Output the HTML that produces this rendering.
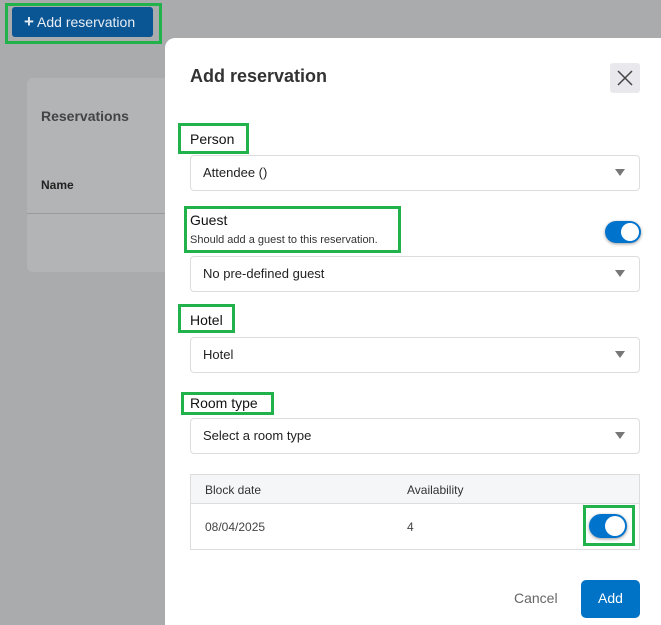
<!DOCTYPE html>
<html style="overflow:hidden;height:625px"><head><style>
*{box-sizing:border-box;margin:0;padding:0}
body{width:661px;height:625px;overflow:hidden;background:#aaabac;font-family:"Liberation Sans",sans-serif;position:relative;color:#333}
.a{position:absolute}
.g{position:absolute;border:3px solid #22b24c}
.sel{position:absolute;left:190px;width:450px;height:36px;border:1px solid #ddd;border-radius:4px;background:#fff;font-size:13px;padding-left:12px;line-height:34px;color:#222}
.sel:after{content:"";position:absolute;right:14px;top:13px;border-left:5px solid transparent;border-right:5px solid transparent;border-top:7px solid #777}
.lbl{position:absolute;font-size:14px;color:#111}
.tog{position:absolute;background:#0073cc;border-radius:12px;box-shadow:0 1px 3px rgba(0,0,0,.4)}
.tog i{position:absolute;right:2px;top:2px;background:#fff;border-radius:50%}
</style></head><body>
<div class="g" style="left:5px;top:3px;width:157px;height:41px"></div>
<div class="a" style="left:12px;top:7px;width:141px;height:30px;background:#0a5593;border-radius:3px;color:#e8eef5;font-size:14px;line-height:29px;padding-left:12px"><b style="font-size:17px">+</b> Add reservation</div>
<div class="a" style="left:27px;top:78px;width:160px;height:194px;background:#b3b4b5;border-radius:6px"></div>
<div class="a" style="left:41px;top:108px;font-size:14px;font-weight:bold;color:#444">Reservations</div>
<div class="a" style="left:41px;top:178px;font-size:12px;font-weight:bold;color:#222">Name</div>
<div class="a" style="left:27px;top:213px;width:140px;height:1px;background:#999"></div>
<div class="a" style="left:165px;top:38px;width:496px;height:587px;background:#fff;border-radius:10px 0 0 0"></div>
<div class="a" style="left:190px;top:66px;font-size:18px;font-weight:bold;color:#333">Add reservation</div>
<div class="a" style="left:610px;top:63px;width:30px;height:30px;background:#e8e8ed;border-radius:3px">
<svg width="30" height="30"><path d="M8 8L22 22M22 8L8 22" stroke="#444" stroke-width="1.5"/></svg></div>
<div class="g" style="left:178px;top:123px;width:71px;height:31px"></div>
<div class="lbl" style="left:190px;top:131px">Person</div>
<div class="sel" style="top:155px">Attendee ()</div>
<div class="g" style="left:184px;top:206px;width:217px;height:47px"></div>
<div class="lbl" style="left:190px;top:212px">Guest</div>
<div class="a" style="left:190px;top:234px;font-size:11px;color:#333">Should add a guest to this reservation.</div>
<div class="tog" style="left:605px;top:221px;width:36px;height:22px"><i style="width:18px;height:18px"></i></div>
<div class="sel" style="top:256px">No pre-defined guest</div>
<div class="g" style="left:178px;top:304px;width:57px;height:29px"></div>
<div class="lbl" style="left:190px;top:312px">Hotel</div>
<div class="sel" style="top:337px">Hotel</div>
<div class="g" style="left:181px;top:392px;width:93px;height:23px"></div>
<div class="lbl" style="left:190px;top:395px">Room type</div>
<div class="sel" style="top:418px">Select a room type</div>
<div class="a" style="left:190px;top:474px;width:450px;height:76px;border:1px solid #ddd"></div>
<div class="a" style="left:191px;top:475px;width:448px;height:29px;background:#f5f6f8;border-bottom:1px solid #ddd"></div>
<div class="a" style="left:205px;top:483px;font-size:12px;color:#333">Block date</div>
<div class="a" style="left:407px;top:483px;font-size:12px;color:#333">Availability</div>
<div class="a" style="left:205px;top:520px;font-size:12px;color:#444">08/04/2025</div>
<div class="a" style="left:407px;top:520px;font-size:12px;color:#444">4</div>
<div class="g" style="left:583px;top:505px;width:52px;height:41px"></div>
<div class="tog" style="left:589px;top:514px;width:38px;height:24px"><i style="width:20px;height:20px"></i></div>
<div class="a" style="left:514px;top:590px;font-size:14px;color:#666">Cancel</div>
<div class="a" style="left:581px;top:580px;width:59px;height:38px;background:#0073c6;border-radius:5px;color:#fff;font-size:14px;text-align:center;line-height:37px">Add</div>
</body></html>
